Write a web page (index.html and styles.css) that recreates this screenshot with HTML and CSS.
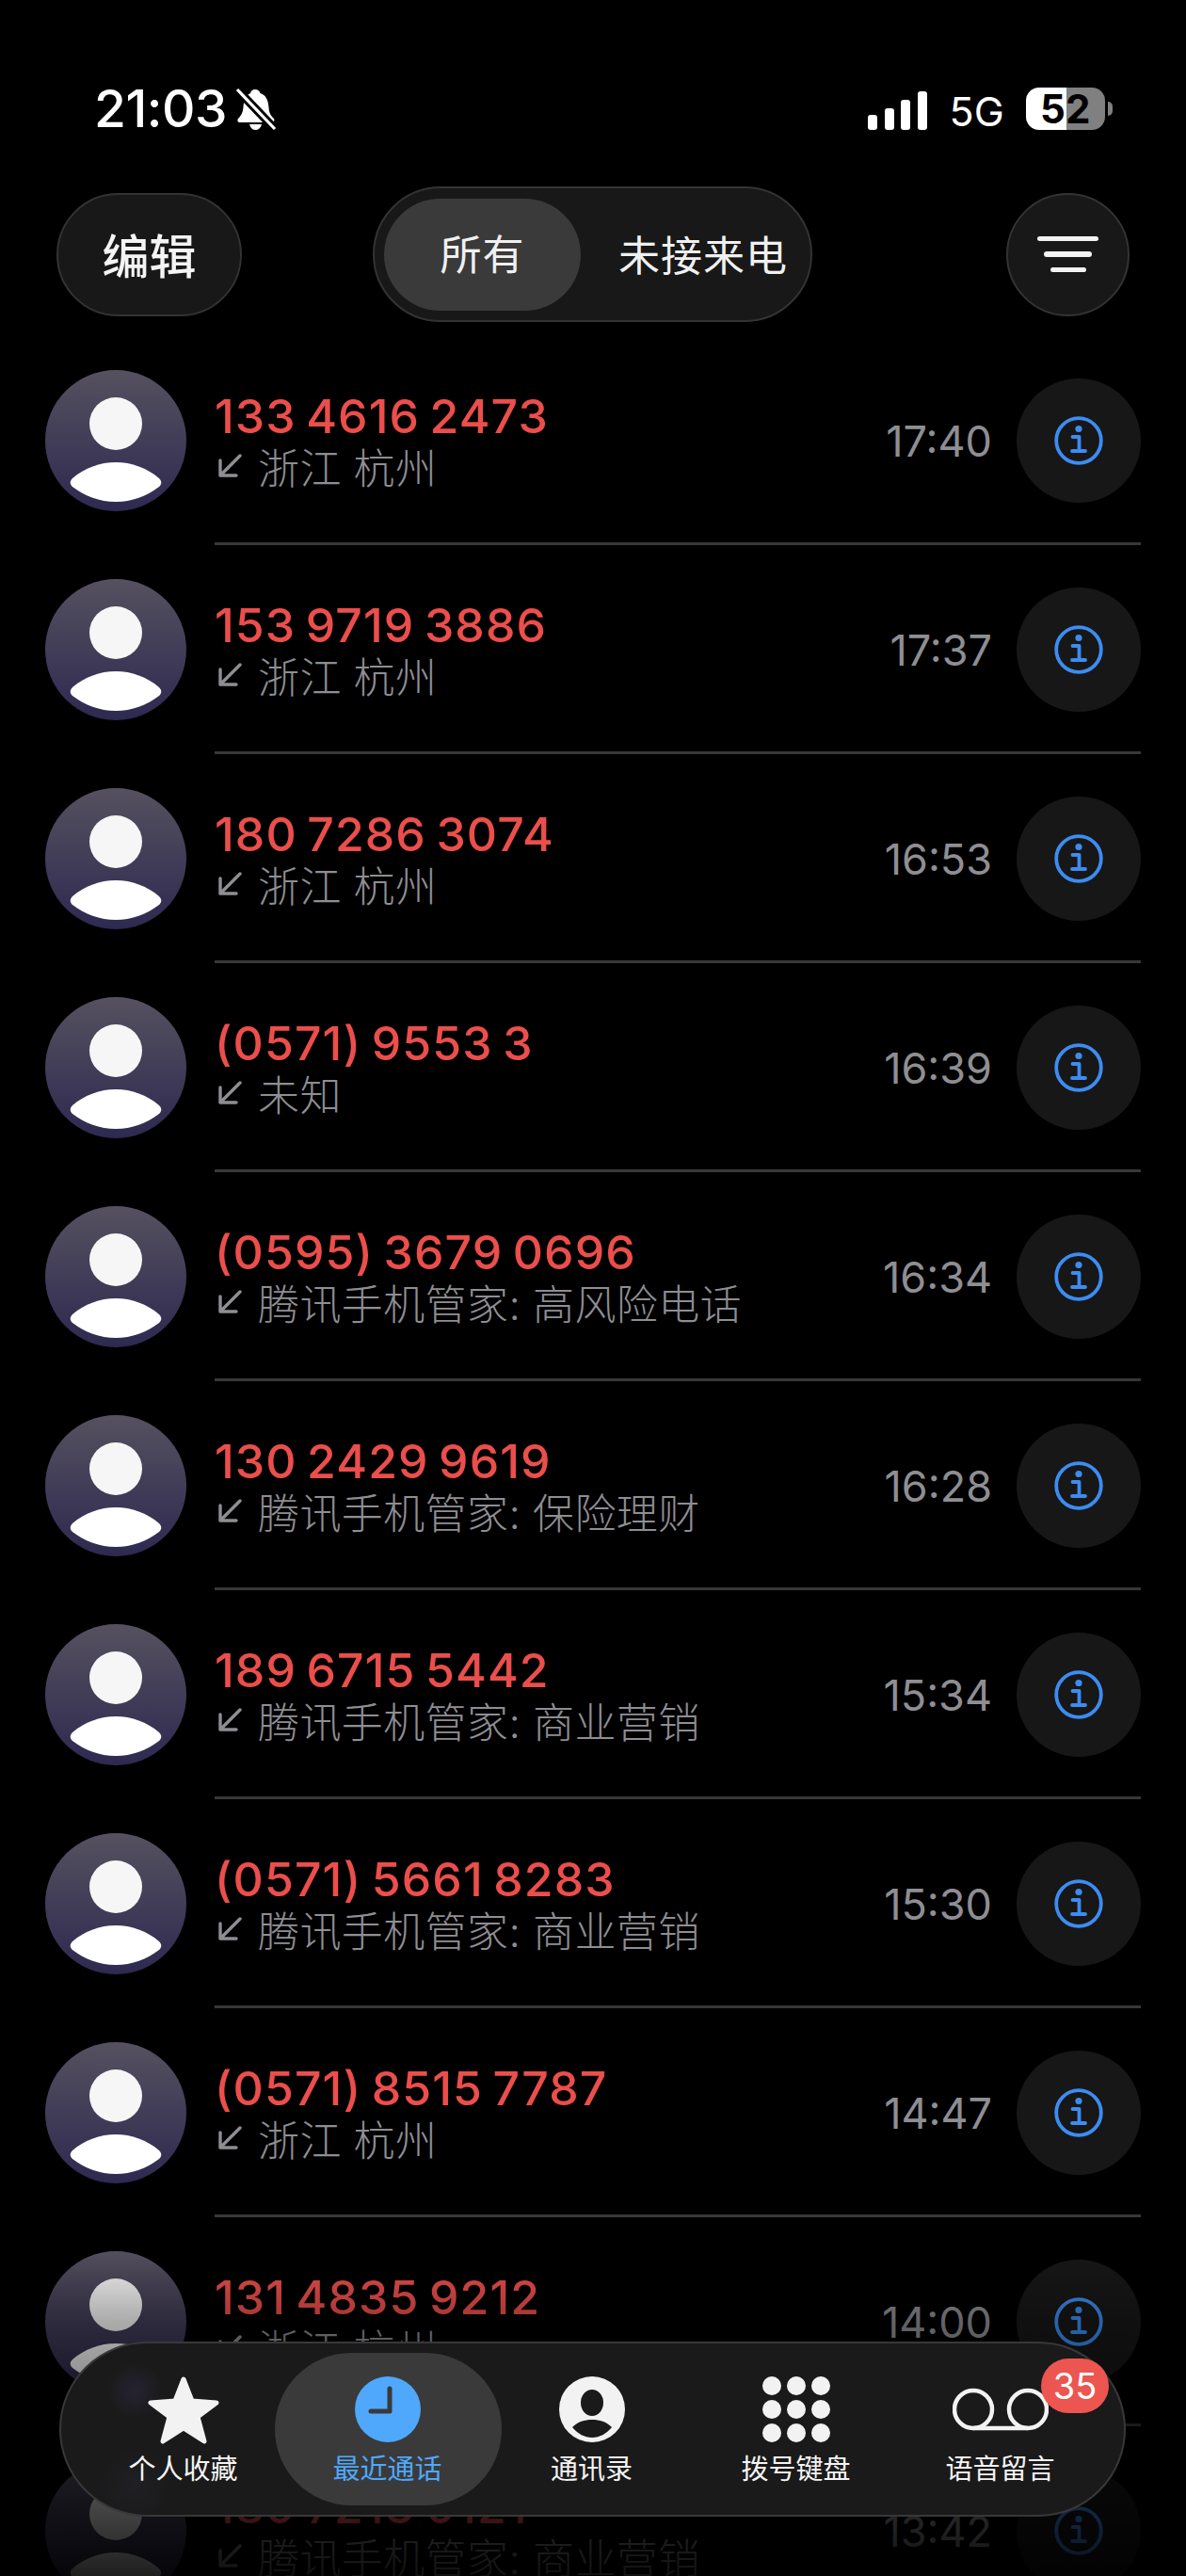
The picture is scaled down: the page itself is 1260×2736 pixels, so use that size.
FILE: index.html
```html
<!DOCTYPE html>
<html lang="zh-CN">
<head>
    <meta charset="UTF-8">
    <title>最近通话</title>
    <link rel="stylesheet" href="styles.css">
</head>
<body>

    <svg class="defs" width="0" height="0">
        <defs>
            <linearGradient id="avatar-bg" x1="0" y1="0" x2="0" y2="1">
                <stop offset="0" stop-color="#55515f"/>
                <stop offset="1" stop-color="#2e2950"/>
            </linearGradient>
            <symbol id="avatar" viewBox="0 0 150 150">
                <circle cx="75" cy="75" r="75" fill="url(#avatar-bg)"/>
                <circle cx="75" cy="57" r="28" fill="#f6f6f6"/>
                <path d="M29 115 C42 104 58 98 75 98 C92 98 108 104 121 115 C124 118 124 121 121 124 C108 134 92 140 75 140 C58 140 42 134 29 124 C26 121 26 118 29 115Z" fill="#fff"/>
            </symbol>
            <symbol id="incoming" viewBox="0 0 26 26">
                <path d="M24 2 L3 23 M3 7 V23 H20" fill="none" stroke="#8e8e93" stroke-width="3.4" stroke-linecap="round" stroke-linejoin="round"/>
            </symbol>
            <symbol id="info" viewBox="0 0 52 52">
                <circle cx="26" cy="26" r="23.8" fill="none" stroke="#3c8cf2" stroke-width="3.8"/>
                <circle cx="26" cy="13.5" r="3.6" fill="#3c8cf2"/>
                <path d="M19.5 22 H26.5 V36.5 M19 37 H33" fill="none" stroke="#3c8cf2" stroke-width="3.8" stroke-linecap="round" stroke-linejoin="round"/>
            </symbol>
        </defs>
    </svg>

    <header class="status-bar">
        <span class="status-time">21:03</span>
        <svg class="bell" width="44" height="46" viewBox="0 0 44 46">
            <path d="M21 2 C24 2 26 4 26.500 6 C33 8 35 14 35.500 21 C36 28 38 30 41 33 C42 35 41 37 39 37 H5 C3 37 1.500 35 3 33 C6 30 8 27 8.500 21 C9 14 11 8 16 6 C16.500 4 18 2 21 2Z" fill="#fff"/>
            <path d="M15 39 H28 C27 43 24.500 45 21.500 45 C18.500 45 16 43 15 39Z" fill="#fff"/>
            <path d="M1 1 L42 44" stroke="#000" stroke-width="9"/>
            <path d="M2 2 L42 44" stroke="#fff" stroke-width="3.200"/>
        </svg>
        <div class="signal">
            <i class="bar-1"></i><i class="bar-2"></i><i class="bar-3"></i><i class="bar-4"></i>
        </div>
        <span class="network">5G</span>
        <div class="battery"><span>52</span></div>
        <i class="battery-nub"></i>
    </header>

    <nav class="top-bar">
        <button class="pill-btn">编辑</button>
        <div class="segment">
            <span class="segment-item segment-active">所有</span>
            <span class="segment-item segment-missed">未接来电</span>
        </div>
        <button class="filter-btn">
            <i class="line-1"></i><i class="line-2"></i><i class="line-3"></i>
        </button>
    </nav>

    <main class="call-list">
        <div class="row">
            <svg class="avatar"><use href="#avatar"/></svg>
            <div class="row-body">
                <div class="row-text">
                    <div class="number">133 4616 2473</div>
                    <div class="sub"><svg class="arrow"><use href="#incoming"/></svg>浙江 杭州</div>
                </div>
                <span class="time">17:40</span>
                <span class="info-btn"><svg class="info"><use href="#info"/></svg></span>
            </div>
        </div>
        <div class="row">
            <svg class="avatar"><use href="#avatar"/></svg>
            <div class="row-body">
                <div class="row-text">
                    <div class="number">153 9719 3886</div>
                    <div class="sub"><svg class="arrow"><use href="#incoming"/></svg>浙江 杭州</div>
                </div>
                <span class="time">17:37</span>
                <span class="info-btn"><svg class="info"><use href="#info"/></svg></span>
            </div>
        </div>
        <div class="row">
            <svg class="avatar"><use href="#avatar"/></svg>
            <div class="row-body">
                <div class="row-text">
                    <div class="number">180 7286 3074</div>
                    <div class="sub"><svg class="arrow"><use href="#incoming"/></svg>浙江 杭州</div>
                </div>
                <span class="time">16:53</span>
                <span class="info-btn"><svg class="info"><use href="#info"/></svg></span>
            </div>
        </div>
        <div class="row">
            <svg class="avatar"><use href="#avatar"/></svg>
            <div class="row-body">
                <div class="row-text">
                    <div class="number">(0571) 9553 3</div>
                    <div class="sub"><svg class="arrow"><use href="#incoming"/></svg>未知</div>
                </div>
                <span class="time">16:39</span>
                <span class="info-btn"><svg class="info"><use href="#info"/></svg></span>
            </div>
        </div>
        <div class="row">
            <svg class="avatar"><use href="#avatar"/></svg>
            <div class="row-body">
                <div class="row-text">
                    <div class="number">(0595) 3679 0696</div>
                    <div class="sub"><svg class="arrow"><use href="#incoming"/></svg>腾讯手机管家: 高风险电话</div>
                </div>
                <span class="time">16:34</span>
                <span class="info-btn"><svg class="info"><use href="#info"/></svg></span>
            </div>
        </div>
        <div class="row">
            <svg class="avatar"><use href="#avatar"/></svg>
            <div class="row-body">
                <div class="row-text">
                    <div class="number">130 2429 9619</div>
                    <div class="sub"><svg class="arrow"><use href="#incoming"/></svg>腾讯手机管家: 保险理财</div>
                </div>
                <span class="time">16:28</span>
                <span class="info-btn"><svg class="info"><use href="#info"/></svg></span>
            </div>
        </div>
        <div class="row">
            <svg class="avatar"><use href="#avatar"/></svg>
            <div class="row-body">
                <div class="row-text">
                    <div class="number">189 6715 5442</div>
                    <div class="sub"><svg class="arrow"><use href="#incoming"/></svg>腾讯手机管家: 商业营销</div>
                </div>
                <span class="time">15:34</span>
                <span class="info-btn"><svg class="info"><use href="#info"/></svg></span>
            </div>
        </div>
        <div class="row">
            <svg class="avatar"><use href="#avatar"/></svg>
            <div class="row-body">
                <div class="row-text">
                    <div class="number">(0571) 5661 8283</div>
                    <div class="sub"><svg class="arrow"><use href="#incoming"/></svg>腾讯手机管家: 商业营销</div>
                </div>
                <span class="time">15:30</span>
                <span class="info-btn"><svg class="info"><use href="#info"/></svg></span>
            </div>
        </div>
        <div class="row">
            <svg class="avatar"><use href="#avatar"/></svg>
            <div class="row-body">
                <div class="row-text">
                    <div class="number">(0571) 8515 7787</div>
                    <div class="sub"><svg class="arrow"><use href="#incoming"/></svg>浙江 杭州</div>
                </div>
                <span class="time">14:47</span>
                <span class="info-btn"><svg class="info"><use href="#info"/></svg></span>
            </div>
        </div>
        <div class="row">
            <svg class="avatar"><use href="#avatar"/></svg>
            <div class="row-body">
                <div class="row-text">
                    <div class="number">131 4835 9212</div>
                    <div class="sub"><svg class="arrow"><use href="#incoming"/></svg>浙江 杭州</div>
                </div>
                <span class="time">14:00</span>
                <span class="info-btn"><svg class="info"><use href="#info"/></svg></span>
            </div>
        </div>
        <div class="row">
            <svg class="avatar"><use href="#avatar"/></svg>
            <div class="row-body">
                <div class="row-text">
                    <div class="number">189 7213 0121</div>
                    <div class="sub"><svg class="arrow"><use href="#incoming"/></svg>腾讯手机管家: 商业营销</div>
                </div>
                <span class="time">13:42</span>
                <span class="info-btn"><svg class="info"><use href="#info"/></svg></span>
            </div>
        </div>
    </main>

    <div class="fade"></div>

    <nav class="tab-bar">
        <div class="tab">
            <svg class="tab-icon" width="76" height="73" viewBox="0 0 76 73">
                <polygon points="38,3 47,26 73,28 53,43 60,69 38,55 16,69 23,43 3,28 29,26" fill="#f2f2f2" stroke="#f2f2f2" stroke-width="5" stroke-linejoin="round"/>
            </svg>
            <span>个人收藏</span>
        </div>
        <div class="tab tab-active">
            <svg class="tab-icon" width="70" height="70" viewBox="0 0 70 70">
                <circle cx="35" cy="35" r="35" fill="#4fa8fb"/>
                <path d="M37 13 V37 H17" fill="none" stroke="#3a3a3a" stroke-width="5" stroke-linecap="round" stroke-linejoin="round"/>
            </svg>
            <span>最近通话</span>
        </div>
        <div class="tab">
            <svg class="tab-icon" width="70" height="70" viewBox="0 0 70 70">
                <circle cx="35" cy="35" r="35" fill="#f2f2f2"/>
                <ellipse cx="35" cy="28" rx="12" ry="14" fill="#1a1a1a"/>
                <path d="M14 54 C20 48 27 46 35 46 C43 46 50 48 56 54 C50 61 43 65 35 65 C27 65 20 61 14 54Z" fill="#1a1a1a"/>
            </svg>
            <span>通讯录</span>
        </div>
        <div class="tab">
            <div class="tab-icon keypad">
                <i></i><i></i><i></i><i></i><i></i><i></i><i></i><i></i><i></i>
            </div>
            <span>拨号键盘</span>
        </div>
        <div class="tab">
            <svg class="tab-icon voicemail" width="102" height="46" viewBox="0 0 102 46">
                <circle cx="22" cy="23" r="20" fill="none" stroke="#f2f2f2" stroke-width="4.500"/>
                <circle cx="80" cy="23" r="20" fill="none" stroke="#f2f2f2" stroke-width="4.500"/>
                <path d="M22 43 H80" stroke="#f2f2f2" stroke-width="4.500"/>
            </svg>
            <span>语音留言</span>
            <b class="badge">35</b>
        </div>
    </nav>

</body>
</html>
```

FILE: styles.css
```css
/* page */
html, body {
    margin: 0;
    padding: 0;
    width: 1260px;
    height: 2736px;
    overflow: hidden;
    background: #000;
    color: #fff;
    font-family: Inter, "Noto Sans CJK SC", sans-serif;
}

.defs {
    display: block;
    height: 0;
}

/* status bar */
.status-bar {
    display: flex;
    align-items: center;
    height: 46px;
    padding: 92px 0 0 100px;
}

.status-time {
    font-size: 55px;
    font-weight: 500;
    letter-spacing: -0.5px;
    width: 150px;
}

.bell {
    margin-top: 1px;
}

.signal {
    display: flex;
    align-items: flex-end;
    gap: 7.5px;
    height: 41px;
    margin: 4px 0 0 628px;
}

.signal i {
    display: block;
    width: 10px;
    border-radius: 3px;
    background: #fff;
}

.bar-1 { height: 16px; }
.bar-2 { height: 23px; }
.bar-3 { height: 32px; }
.bar-4 { height: 41px; }

.network {
    font-size: 43px;
    font-weight: 400;
    margin-left: 24px;
    margin-top: 5px;
}

.battery {
    width: 84px;
    height: 45px;
    margin-left: 23px;
    border-radius: 14px;
    background: linear-gradient(90deg, #fff 0, #fff 51%, #808080 51%, #808080 100%);
    color: #000;
    text-align: center;
    font-size: 42px;
    font-weight: 700;
    line-height: 45px;
}

.battery-nub {
    display: block;
    width: 5px;
    height: 15px;
    margin-left: 3px;
    border-radius: 0 5px 5px 0;
    background: #808080;
}

/* top buttons */
.top-bar {
    display: flex;
    align-items: center;
    height: 144px;
    margin-top: 60px;
    padding: 0 60px;
}

.pill-btn, .filter-btn {
    height: 131px;
    border: 2px solid #333;
    background: #181818;
    color: #f4f4f4;
    padding: 0;
    box-sizing: border-box;
}

.pill-btn {
    width: 197px;
    padding-bottom: 2px;
    border-radius: 66px;
    font-family: inherit;
    font-size: 50px;
    font-weight: 500;
}

.segment {
    display: flex;
    align-items: center;
    box-sizing: border-box;
    width: 467px;
    height: 144px;
    margin-left: 139px;
    padding: 0 10px;
    border: 2px solid #333;
    border-radius: 72px;
    background: #181818;
    font-size: 44px;
    color: #f0f0f0;
}

.segment-item {
    flex: 1;
    text-align: center;
    letter-spacing: 1px;
}

.segment-active {
    flex: none;
    width: 209px;
    height: 119px;
    line-height: 121px;
    border-radius: 60px;
    background: #3a3a3a;
}

.segment-missed {
    padding: 0 0 2px 26px;
}

.filter-btn {
    display: flex;
    flex-direction: column;
    align-items: center;
    justify-content: center;
    gap: 11px;
    width: 131px;
    margin-left: auto;
    border-radius: 50%;
}

.filter-btn i {
    display: block;
    height: 5.5px;
    border-radius: 3px;
    background: #f2f2f2;
}

.line-1 { width: 65px; }
.line-2 { width: 51px; }
.line-3 { width: 38px; }

/* call list */
.call-list {
    margin-top: 15px;
}

.row {
    display: flex;
    align-items: center;
    height: 222px;
    padding: 0 48px;
}

.avatar {
    flex: none;
    width: 150px;
    height: 150px;
    margin-right: 30px;
}

.row-body {
    display: flex;
    align-items: center;
    flex: 1;
    box-sizing: border-box;
    height: 222px;
    padding-top: 3px;
    border-bottom: 3px solid #38383a;
}

.row-text {
    flex: 1;
}

.number {
    color: #eb4e4b;
    font-size: 50px;
    font-weight: 500;
    letter-spacing: 1.1px;
    word-spacing: -4px;
    line-height: 56px;
}

.sub {
    display: flex;
    align-items: center;
    height: 54px;
    margin-top: -2px;
    color: #8e8e93;
    font-size: 44px;
    font-weight: 300;
    letter-spacing: 0.4px;
}

.arrow {
    width: 26px;
    height: 26px;
    margin: 0 17px 0 3px;
}

.time {
    color: #8e8e93;
    font-size: 45px;
    margin-right: 26px;
}

.info-btn {
    display: flex;
    align-items: center;
    justify-content: center;
    width: 132px;
    height: 132px;
    border-radius: 50%;
    background: #171717;
}

.info {
    width: 52px;
    height: 52px;
}

/* list fades out behind the tab bar */
.fade {
    position: absolute;
    left: 0;
    top: 2385px;
    width: 1260px;
    height: 351px;
    background: linear-gradient(180deg, rgba(0,0,0,0) 0, rgba(0,0,0,0.3) 80px, rgba(0,0,0,0.88) 351px);
}

/* tab bar */
.tab-bar {
    position: absolute;
    left: 63px;
    top: 2487px;
    display: grid;
    grid-template-columns: repeat(5, 217px);
    box-sizing: border-box;
    width: 1133px;
    height: 186px;
    padding: 0 21px;
    border: 2px solid #383838;
    border-radius: 93px;
    background:
        radial-gradient(circle at 78px 50px, rgba(50,44,72,0.5), rgba(50,44,72,0) 30px),
        radial-gradient(circle at 78px 150px, rgba(40,38,52,0.4), rgba(40,38,52,0) 40px),
        #1a1a1a;
}

.tab {
    position: relative;
    display: flex;
    flex-direction: column;
    align-items: center;
    color: #f4f4f4;
    font-size: 29px;
    line-height: 30px;
}

.tab span {
    position: absolute;
    top: 119px;
    white-space: nowrap;
    z-index: 1;
}

.tab-icon {
    position: absolute;
    top: 35px;
    z-index: 1;
}

.tab-active {
    color: #4fa8fb;
}

.tab-active::before {
    content: "";
    position: absolute;
    top: 10px;
    left: -11px;
    width: 241px;
    height: 162px;
    border-radius: 81px;
    background: #3a3a3a;
}

.keypad {
    display: grid;
    grid-template-columns: repeat(3, 20px);
    grid-auto-rows: 20px;
    gap: 5px 6px;
}

.keypad i {
    display: block;
    border-radius: 50%;
    background: #f2f2f2;
}

.tab .voicemail {
    top: 47px;
}

.badge {
    position: absolute;
    top: 16px;
    left: 152px;
    z-index: 2;
    width: 72px;
    height: 58px;
    border-radius: 29px;
    background: #ec5550;
    color: #fff;
    text-align: center;
    font-size: 38px;
    font-weight: 400;
    line-height: 58px;
}
```
